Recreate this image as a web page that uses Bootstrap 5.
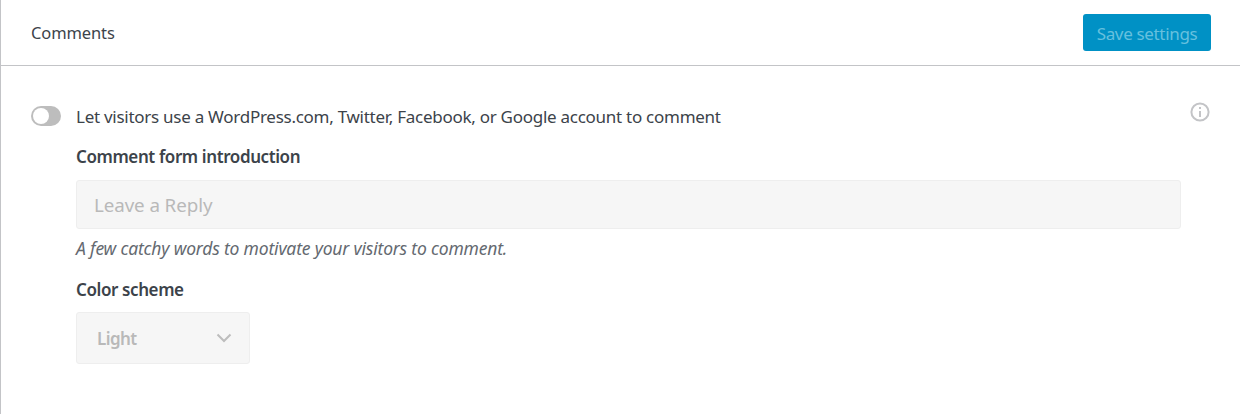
<!doctype html>
<html lang="en">
<head>
<meta charset="utf-8">
<title>Comments settings</title>
<link href="https://cdn.jsdelivr.net/npm/bootstrap@5.3.0/dist/css/bootstrap.min.css" rel="stylesheet">
<style>
html,body{height:414px;overflow:hidden;background:#fff}
body{font-family:"Noto Sans","Open Sans",sans-serif;color:#3c434a;font-size:17px;letter-spacing:-.27px}
.shell{border-left:1px solid #c3c4c7;height:414px;width:1240px}
.head-bar{height:66px;border-bottom:1px solid #c3c4c7;padding:0 29px 0 30px}
.head-title{font-size:16.5px;color:#3c434a;letter-spacing:-.12px;padding-top:2px}
.save-btn{height:37px;width:128px;background:#0091c5;border:0;border-radius:3px;color:#5fbcdc;font-size:17px;padding:2px 0 0;letter-spacing:-.33px}
.save-btn:disabled{background:#0091c5;color:#66c0de;opacity:1}
.form-zone{padding:39px 29px 0 30px}
.tog{width:30px;height:20px;border-radius:10px;background:#bdbdbd;flex:none;padding:2px;margin:-2px -1px 0 0}
.tog-knob{width:16px;height:16px;border-radius:50%;background:#fff;display:block}
.opt-label{line-height:22px}
.opt-row{margin-top:1px}
.info-ico{width:20px;height:20px;color:#c3c4c7;margin:-10px 1px 0 auto;flex:none}
.field-col{padding-left:45px;width:1150px}
.fld-label{font-weight:600;font-size:17px;line-height:22px;margin:0;letter-spacing:-.4px}
.fld-first{margin-top:18px}
.fld-second{margin-top:20px}
.txt-fake{height:49px;background:#f5f5f5;border:1px solid #eeeeee;border-radius:3px;color:#b9b9b9;font-size:18.8px;padding:0 17px;margin-top:12px;letter-spacing:-.1px}
.txt-fake::placeholder{color:#b9b9b9;opacity:1}
.txt-fake:disabled{background:#f6f6f6;border-color:#eeeeee}
.hint{font-style:italic;color:#646970;font-size:17.5px;line-height:22px;margin:8px 0 0;letter-spacing:-.18px}
.sel-fake{width:174px;height:52px;background:#f6f6f6;border:1px solid #eeeeee;border-radius:3px;color:#b9b9b9;font-weight:600;font-size:17px;padding:0 17px 0 20px;margin-top:11px;letter-spacing:-.6px}
.sel-text{padding-top:2px}
</style>
</head>
<body>
<div class="shell">
  <div class="head-bar d-flex align-items-center justify-content-between">
    <span class="head-title">Comments</span>
    <button class="save-btn" type="button" disabled>Save settings</button>
  </div>
  <div class="form-zone">
    <div class="d-flex align-items-center gap-3 opt-row">
      <span class="tog"><span class="tog-knob"></span></span>
      <span class="opt-label">Let visitors use a WordPress.com, Twitter, Facebook, or Google account to comment</span>
      <svg class="info-ico" viewBox="0 0 20 20" fill="none" stroke="currentColor" stroke-width="2" aria-hidden="true"><circle cx="10" cy="10" r="8.6"/><path d="M10 9v6M10 5v2"/></svg>
    </div>
    <div class="field-col">
      <p class="fld-label fld-first">Comment form introduction</p>
      <input class="form-control shadow-none txt-fake" type="text" placeholder="Leave a Reply" disabled>
      <p class="hint">A few catchy words to motivate your visitors to comment.</p>
      <p class="fld-label fld-second">Color scheme</p>
      <div class="sel-fake d-flex align-items-center justify-content-between">
        <span class="sel-text">Light</span>
        <svg width="16" height="10" viewBox="0 0 16 10" fill="none" stroke="#bdbdbd" stroke-width="2" aria-hidden="true"><path d="M1.5 1.5 8 8l6.5-6.5"/></svg>
      </div>
    </div>
  </div>
</div>
<script src="https://cdn.jsdelivr.net/npm/bootstrap@5.3.0/dist/js/bootstrap.bundle.min.js"></script>
</body>
</html>
